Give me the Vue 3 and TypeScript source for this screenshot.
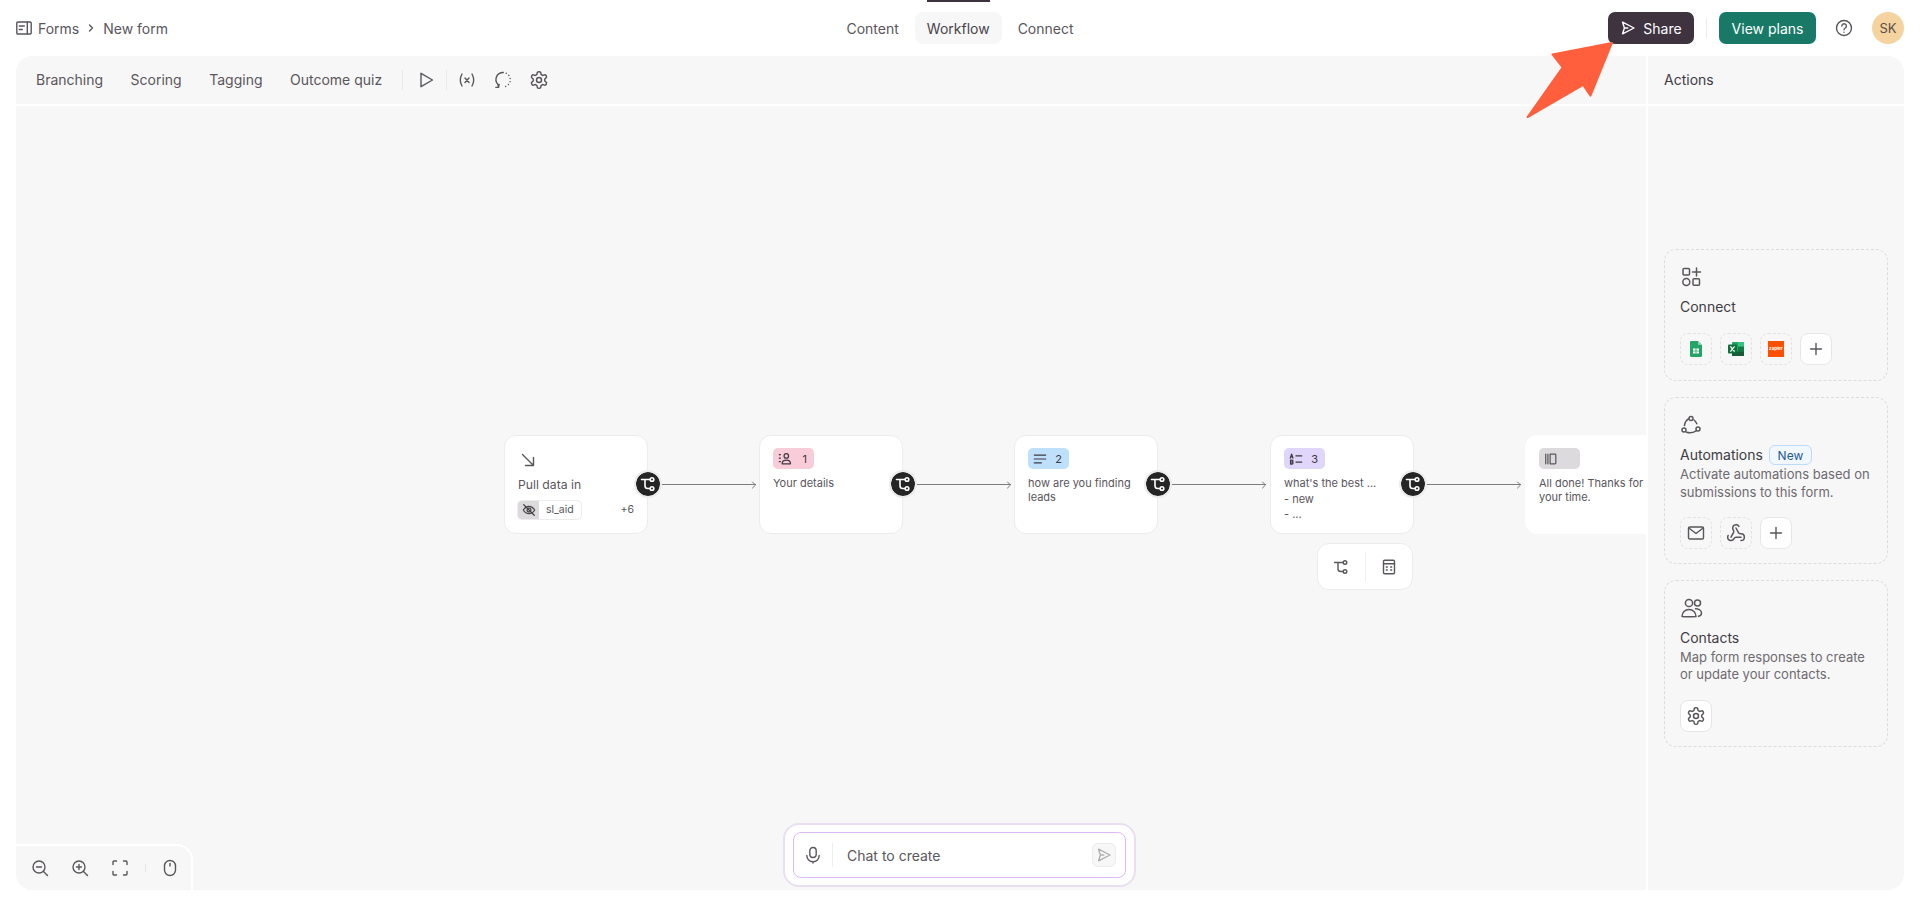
<script setup lang="ts">
interface FlowNode {
  x: number
  badge?: string
  icon?: string
  num?: string
  lines?: string[]
  clipped?: boolean
}

const tabs = ['Content', 'Workflow', 'Connect']
const tools = ['Branching', 'Scoring', 'Tagging', 'Outcome quiz']

const nodes: FlowNode[] = [
  { x: 743, badge: 'pink', icon: 'i-person', num: '1', lines: ['Your details'] },
  { x: 998, badge: 'blue', icon: 'i-lines', num: '2', lines: ['how are you finding', 'leads'] },
  { x: 1254, badge: 'purple', icon: 'i-ab', num: '3', lines: ["what's the best ..."] },
  { x: 1509, badge: 'grey', icon: 'i-columns', lines: ['All done! Thanks for', 'your time.'], clipped: true },
]
const connectors = [632, 887, 1142, 1397]
</script>

<template>
  <div class="page">
    <svg class="sprite" aria-hidden="true">
      <symbol id="i-branch" viewBox="0 0 16 16">
        <path d="M1.500 3.500h8.500M5 3.500v6.200a2.800 2.800 0 0 0 2.800 2.800H10" />
        <circle cx="12" cy="3.500" r="1.800" />
        <circle cx="12" cy="12.500" r="1.800" />
      </symbol>
      <symbol id="i-gear" viewBox="0 0 24 24">
        <path d="M12.22 2h-.44a2 2 0 0 0-2 2v.18a2 2 0 0 1-1 1.73l-.43.25a2 2 0 0 1-2 0l-.15-.08a2 2 0 0 0-2.73.73l-.22.38a2 2 0 0 0 .73 2.73l.15.1a2 2 0 0 1 1 1.72v.51a2 2 0 0 1-1 1.74l-.15.09a2 2 0 0 0-.73 2.73l.22.38a2 2 0 0 0 2.73.73l.15-.08a2 2 0 0 1 2 0l.43.25a2 2 0 0 1 1 1.73V20a2 2 0 0 0 2 2h.44a2 2 0 0 0 2-2v-.18a2 2 0 0 1 1-1.73l.43-.25a2 2 0 0 1 2 0l.15.08a2 2 0 0 0 2.73-.73l.22-.39a2 2 0 0 0-.73-2.73l-.15-.08a2 2 0 0 1-1-1.74v-.5a2 2 0 0 1 1-1.74l.15-.09a2 2 0 0 0 .73-2.73l-.22-.38a2 2 0 0 0-2.73-.73l-.15.08a2 2 0 0 1-2 0l-.43-.25a2 2 0 0 1-1-1.73V4a2 2 0 0 0-2-2z" />
        <circle cx="12" cy="12" r="3" />
      </symbol>
      <symbol id="i-send" viewBox="0 0 16 16">
        <path d="M2.600 2.200 14 8 2.600 13.800 4.400 8zM4.400 8h3.400" />
      </symbol>
      <symbol id="i-plus" viewBox="0 0 16 16">
        <path d="M8 2.500v11M2.500 8h11" />
      </symbol>
      <symbol id="i-person" viewBox="0 0 16 16">
        <circle cx="9.500" cy="4.500" r="2.600" />
        <path d="M4.700 13.500c0-2.700 2-4.200 4.800-4.200s4.800 1.500 4.800 4.200zM1.500 3h1.200M1.500 7h1.200M1.500 11h1.200" />
      </symbol>
      <symbol id="i-lines" viewBox="0 0 16 16">
        <path d="M1.500 3.500h13M1.500 8h13M1.500 12.500h8" />
      </symbol>
      <symbol id="i-ab" viewBox="0 0 16 16">
        <path class="heavy" d="M1.500 7 3 2.500 4.500 7M2 5.500h2M1.800 9.200v4.500h1.600a1.100 1.100 0 0 0 0-2.300 1.100 1.100 0 0 0 0-2.200zM8 4.500h6.500M8 11.500h6.500" />
      </symbol>
      <symbol id="i-columns" viewBox="0 0 16 16">
        <path d="M2 2.500v11M4.500 2.500v11M7 2.500h5.500a1 1 0 0 1 1 1v9a1 1 0 0 1-1 1H7z" />
      </symbol>
    </svg>

    <header class="topbar">
      <nav class="crumbs">
        <svg class="ic16" viewBox="0 0 16 16"><rect x="0.800" y="2" width="14.400" height="12" rx="1" /><path d="M3.300 6h5M3.300 9.500h3M11.300 2v12" /></svg>
        <span class="crumb-first">Forms</span>
        <svg class="chev" viewBox="0 0 10 10"><path d="m3.500 2 3 3-3 3" /></svg>
        <span>New form</span>
      </nav>
      <div class="tabs">
        <button v-for="t in tabs" :key="t" class="tab" :class="{ active: t === 'Workflow' }">{{ t }}</button>
      </div>
      <div class="top-actions">
        <button class="share">
          <svg class="ic16" viewBox="0 0 16 16"><use href="#i-send" /></svg>
          Share
        </button>
        <span class="top-sep"></span>
        <button class="plans">View plans</button>
        <svg class="help" viewBox="0 0 20 20">
          <circle cx="10" cy="10" r="7.500" />
          <path d="M7.800 8a2.300 2.300 0 1 1 3.500 2c-.8.500-1.300.900-1.300 1.800M10 14.200v.1" />
        </svg>
        <div class="avatar">SK</div>
      </div>
    </header>

    <main class="panel">
      <section class="builder">
        <div class="toolbar">
          <div class="tool-group">
            <button v-for="t in tools" :key="t" class="tool">{{ t }}</button>
          </div>
          <span class="tool-sep first"></span>
          <span class="tool-icon play">
            <svg class="ic20" viewBox="0 0 20 20"><path d="M5 3.300 16.500 10 5 16.700z" /></svg>
          </span>
          <span class="tool-sep second"></span>
          <div class="icon-group">
            <span class="tool-icon">
              <svg class="ic20" viewBox="0 0 20 20"><path d="M5 4c-2 3.500-2 8.500 0 12M15 4c2 3.500 2 8.500 0 12M8 8l4 4.500M12 8l-4 4.500" /></svg>
            </span>
            <span class="tool-icon">
              <svg class="ic20" viewBox="0 0 20 20"><path d="M10 2.500a7 7 0 0 0-5.200 11.700l.8 3M5.600 17.200l-2.700.2M5.600 17.200l.5-2.700" /><path class="dots" d="M10 2.500a7 7 0 0 1 0 14.500" /></svg>
            </span>
            <span class="tool-icon">
              <svg class="ic20 thick" viewBox="0 0 24 24"><use href="#i-gear" /></svg>
            </span>
          </div>
        </div>

        <div class="canvas">
          <div class="hline" v-for="c in connectors" :key="c" :style="{ left: c + 'px' }">
            <svg class="head" viewBox="0 0 6 8"><path d="m1.500 1 3 3-3 3" /></svg>
          </div>

          <article class="node source">
            <svg class="ic14 source-icon" viewBox="0 0 14 14"><path d="m1.500 1.500 11 11M12.500 4.500v8h-8" /></svg>
            <div class="source-title">Pull data in</div>
            <div class="source-row">
              <div class="chip">
                <span class="chip-eye">
                  <svg class="ic14" viewBox="0 0 16 16"><path d="M1.500 8S4 3.800 8 3.800 14.500 8 14.500 8 12 12.200 8 12.200 1.500 8 1.500 8z" /><circle cx="8" cy="8" r="2.200" /><path d="m2 2 12 12" /></svg>
                </span>
                <span class="chip-label">sl_aid</span>
              </div>
              <span class="more">+6</span>
            </div>
          </article>

          <article
            v-for="n in nodes"
            :key="n.x"
            class="node"
            :class="{ clipped: n.clipped }"
            :style="{ left: n.x + 'px' }"
          >
            <div class="badge" :class="n.badge">
              <svg class="ic14" viewBox="0 0 16 16"><use :href="'#' + n.icon" /></svg>
              <span v-if="n.num">{{ n.num }}</span>
            </div>
            <p class="node-text">
              <template v-for="l in n.lines" :key="l">{{ l }}<br /></template>
            </p>
            <div v-if="n.num === '3'" class="opts">
              <div>- new</div>
              <div>- ...</div>
            </div>
          </article>

          <button v-for="c in connectors" :key="'b' + c" class="disk" :style="{ left: c - 14 + 'px' }">
            <svg class="ic16 disk-icon" viewBox="0 0 16 16"><use href="#i-branch" /></svg>
          </button>

          <div class="mini">
            <span class="mini-cell">
              <svg class="ic16" viewBox="0 0 16 16"><use href="#i-branch" /></svg>
            </span>
            <span class="mini-cell second">
              <svg class="ic16" viewBox="0 0 16 16"><rect x="2.500" y="1.200" width="11" height="13.600" rx="1.200" /><path d="M2.500 4.800h11M5.300 8h1M9.700 8h1M5.300 11h1M9.700 11h1" /></svg>
            </span>
          </div>

          <div class="zoombar">
            <svg class="ic18" viewBox="0 0 18 18"><circle cx="8" cy="8" r="6" /><path d="m12.500 12.500 4 4M5.500 8h5" /></svg>
            <svg class="ic18" viewBox="0 0 18 18"><circle cx="8" cy="8" r="6" /><path d="m12.500 12.500 4 4M5.500 8h5M8 5.500v5" /></svg>
            <svg class="ic18" viewBox="0 0 18 18"><path d="M2 5.500V3a1 1 0 0 1 1-1h2.500M12.500 2H15a1 1 0 0 1 1 1v2.500M16 12.500V15a1 1 0 0 1-1 1h-2.500M5.500 16H3a1 1 0 0 1-1-1v-2.500" /></svg>
            <span class="zoom-sep"></span>
            <svg class="ic18" viewBox="0 0 18 18"><rect x="3.500" y="1.500" width="11" height="15" rx="5.500" /><path d="M9 4.500v2.500" /></svg>
          </div>

          <div class="chat">
            <div class="chat-inner">
              <svg class="ic18 mic" viewBox="0 0 18 18"><rect x="5.800" y="1.500" width="6.400" height="10" rx="3.200" /><path d="M2.800 9.500a6.200 6.200 0 0 0 12.400 0M9 15.700v1.300" /></svg>
              <span class="chat-sep"></span>
              <span class="chat-text">Chat to create</span>
              <span class="chat-send">
                <svg class="ic16" viewBox="0 0 16 16"><use href="#i-send" /></svg>
              </span>
            </div>
          </div>
        </div>
      </section>

      <aside class="side">
        <div class="side-head">Actions</div>
        <div class="side-body">
          <div class="card first">
            <svg class="card-icon" viewBox="0 0 22 22"><rect x="3" y="2.500" width="6.500" height="6.500" rx="1" /><path d="M16.500 2v8M12.500 6h8" /><circle cx="6.300" cy="16" r="3.500" /><rect x="13" y="12.800" width="6.500" height="6.500" rx="1" /></svg>
            <h3 class="card-title">Connect</h3>
            <div class="card-btns">
              <span class="sq dashed">
                <svg class="logo" viewBox="0 0 16 16">
                  <path class="fill-sheet" d="M3 0h7l4 4v10.500a1.500 1.500 0 0 1-1.500 1.500h-9A1.500 1.500 0 0 1 2 14.500V1a1 1 0 0 1 1-1z" />
                  <path class="fill-sheet-d" d="M10 0l4 4h-3a1 1 0 0 1-1-1z" />
                  <rect class="fill-white" x="5" y="7.500" width="6" height="5" />
                  <path class="sheet-grid" d="M8 7.500v5M5 10h6" />
                </svg>
              </span>
              <span class="sq dashed">
                <svg class="logo" viewBox="0 0 16 16">
                  <rect class="x1" x="4" y="1" width="12" height="14" rx="1" />
                  <rect class="x2" x="10" y="1" width="6" height="4.700" />
                  <rect class="x3" x="10" y="5.700" width="6" height="4.700" />
                  <rect class="x4" x="4" y="10.400" width="12" height="4.600" />
                  <rect class="x5" x="0" y="3.500" width="9" height="9" rx="1" />
                  <path class="x-mark" d="m2.800 5.800 3.400 4.400M6.200 5.800l-3.400 4.400" />
                </svg>
              </span>
              <span class="sq dashed">
                <span class="zapier">zapier</span>
              </span>
              <span class="sq solid">
                <svg class="ic16" viewBox="0 0 16 16"><use href="#i-plus" /></svg>
              </span>
            </div>
          </div>

          <div class="card">
            <svg class="card-icon" viewBox="0 0 22 22"><circle cx="11" cy="4.500" r="2" /><circle cx="4" cy="16" r="2" /><circle cx="18" cy="15" r="2" /><path d="M8.700 4.700C6.500 6 5 8 4.400 11.500M14 6c1.400 1 2.200 2.300 2.800 3.800M6.500 18.300c3.500 1 6.800.4 9.700-1.500" /></svg>
            <div class="title-row">
              <h3 class="card-title">Automations</h3>
              <span class="new">New</span>
            </div>
            <p class="desc">Activate automations based on submissions to this form.</p>
            <div class="card-btns">
              <span class="sq dashed">
                <svg class="ic18" viewBox="0 0 18 18"><rect x="1.500" y="3" width="15" height="12" rx="1.300" /><path d="m1.800 4 7.200 5.500L16.200 4" /></svg>
              </span>
              <span class="sq dashed">
                <svg class="ic20 thick" viewBox="0 0 24 24"><path d="M18 16.980h-5.990c-1.100 0-1.950.940-2.480 1.900A4 4 0 0 1 2 17c.010-.700.200-1.400.570-2" /><path d="m6 17 3.130-5.780c.530-.970.100-2.180-.500-3.100a4 4 0 1 1 6.890-4.060" /><path d="m12 6 3.130 5.730C15.660 12.700 16.900 13 18 13a4 4 0 0 1 0 8" /></svg>
              </span>
              <span class="sq solid">
                <svg class="ic16" viewBox="0 0 16 16"><use href="#i-plus" /></svg>
              </span>
            </div>
          </div>

          <div class="card tight">
            <svg class="card-icon contacts" viewBox="0 0 24 22"><circle cx="9" cy="6" r="3.600" /><circle cx="17.500" cy="6" r="3" /><path d="M2 19.500c0-4.200 3-7 7-7s7 2.800 7 7c-4 .3-10 .3-14 0zM15.500 11.800c3 0 6 1.500 6 4.500 0 1.700-1 2.600-3 3" /></svg>
            <h3 class="card-title">Contacts</h3>
            <p class="desc">Map form responses to create or update your contacts.</p>
            <div class="card-btns">
              <span class="sq solid">
                <svg class="ic20 thick" viewBox="0 0 24 24"><use href="#i-gear" /></svg>
              </span>
            </div>
          </div>
        </div>
      </aside>
    </main>

    <svg class="pointer" viewBox="0 0 90 80">
      <path d="M88 1 66 55 58.500 44 1.500 77 37.500 26 27 12.800z" />
    </svg>
  </div>
</template>

<style>
html,
body {
  margin: 0;
  background: #fff;
}
</style>

<style scoped>
.page {
  position: relative;
  height: 906px;
  overflow: hidden;
  display: flex;
  flex-direction: column;
  font-family: Inter, "Liberation Sans", sans-serif;
  font-size: 14px;
  color: #5a565c;
  background: #fff;
}
.sprite {
  position: absolute;
  width: 0;
  height: 0;
}
svg {
  fill: none;
  stroke: currentColor;
  stroke-width: 1.400;
  stroke-linecap: round;
  stroke-linejoin: round;
  flex: none;
  display: block;
}
button {
  font: inherit;
  color: inherit;
  border: 0;
  background: none;
  padding: 0;
}
.ic14 { width: 14px; height: 14px; }
.ic16 { width: 16px; height: 16px; }
.ic18 { width: 18px; height: 18px; }
.ic20 { width: 20px; height: 20px; }
.thick { stroke-width: 1.800; }

/* top bar */
.topbar {
  height: 56px;
  flex: none;
  display: grid;
  grid-template-columns: 1fr auto 1fr;
  align-items: center;
  padding: 0 16px;
  box-sizing: border-box;
}
.crumbs {
  display: flex;
  align-items: center;
}
.crumb-first { margin-left: 6px; }
.chev {
  width: 10px;
  height: 10px;
  margin: 0 7px;
  stroke-width: 1.400;
}
.tabs {
  display: flex;
  gap: 4px;
  height: 56px;
  align-items: flex-start;
}
.tab {
  height: 32px;
  margin-top: 12px;
  padding: 0 12px;
  border-radius: 8px;
  position: relative;
}
.tab.active {
  background: #f7f7f7;
  color: #4a444c;
}
.tab.active::before {
  content: "";
  position: absolute;
  top: -12px;
  left: 12px;
  right: 12px;
  height: 2px;
  background: #3e323e;
}
.top-actions {
  display: flex;
  align-items: center;
  justify-content: flex-end;
}
.share {
  height: 32px;
  width: 86px;
  display: flex;
  align-items: center;
  justify-content: center;
  gap: 7px;
  background: #3e333f;
  border-radius: 7px;
  color: #fff;
}
.top-sep {
  width: 1px;
  height: 20px;
  margin: 0 12px;
  background: #ececec;
}
.plans {
  height: 32px;
  width: 97px;
  background: #187a66;
  color: #fff;
  border-radius: 7px;
}
.help {
  width: 20px;
  height: 20px;
  margin-left: 18px;
}
.avatar {
  width: 32px;
  height: 32px;
  margin-left: 18px;
  border-radius: 50%;
  background: #f4d39f;
  color: #5a4f4a;
  display: flex;
  align-items: center;
  justify-content: center;
  font-size: 13px;
}

/* main */
.panel {
  flex: none;
  height: 834px;
  margin: 0 16px;
  display: flex;
  gap: 2px;
  border-radius: 16px;
  overflow: hidden;
}
.builder {
  flex: 1;
  display: flex;
  flex-direction: column;
  gap: 2px;
  min-width: 0;
}
.toolbar {
  height: 48px;
  box-sizing: border-box;
  flex: none;
  display: flex;
  align-items: center;
  padding: 0 0 1px 20px;
  background: #f7f7f7;
}
.tool-group {
  display: flex;
  gap: 27.500px;
}
.icon-group {
  display: flex;
  gap: 4px;
  margin-left: 4px;
}
.tool-sep {
  width: 1px;
  height: 20px;
  background: #e9e9e9;
}
.tool-sep.first { margin-left: 20px; }
.tool-icon {
  width: 32px;
  height: 32px;
  display: flex;
  align-items: center;
  justify-content: center;
}
.tool-icon.play { margin: 0 4px 0 7px; }
.dots { stroke-dasharray: 0.100 3.200; }

.canvas {
  flex: 1;
  position: relative;
  overflow: hidden;
  background: #f7f7f7;
}
.hline {
  position: absolute;
  top: 378px;
  width: 108px;
  height: 1px;
  background: #7d7b7d;
}
.head {
  position: absolute;
  right: -1px;
  top: -3.500px;
  width: 6px;
  height: 8px;
  stroke-width: 1;
  color: #777;
}
.node {
  position: absolute;
  top: 329px;
  width: 144px;
  height: 99px;
  box-sizing: border-box;
  padding: 12px 13px;
  background: #fff;
  border: 1px solid #ececec;
  border-radius: 12px;
  font-size: 11px;
  line-height: 14px;
}
.node.clipped {
  border-color: #fff;
}
.source {
  left: 488px;
  padding-top: 17px;
}
.source-icon {
  width: 14px;
  height: 14px;
  margin-left: 3px;
}
.source-title {
  margin-top: 10px;
  font-size: 12.200px;
  line-height: 16px;
}
.source-row {
  margin-top: 7px;
  display: flex;
  align-items: center;
  justify-content: space-between;
  margin-left: -1px;
}
.chip {
  display: flex;
  height: 20px;
  width: 65px;
  box-sizing: border-box;
  border: 1px solid #ececec;
  border-radius: 5px;
  overflow: hidden;
  font-size: 10.500px;
}
.chip-eye {
  width: 21px;
  background: #dcdadc;
  display: flex;
  align-items: center;
  justify-content: center;
  color: #444;
}
.chip-label {
  margin-left: 7px;
  line-height: 18px;
}
.more { font-size: 10.500px; }
.badge {
  width: 41px;
  height: 21px;
  border-radius: 5px;
  box-sizing: border-box;
  padding: 0 7px 0 5px;
  display: flex;
  align-items: center;
  justify-content: space-between;
  font-size: 11px;
  color: #3d3a40;
}
.badge.pink { background: #f8ccd9; }
.badge.blue { background: #bfe0fb; }
.badge.purple { background: #e0d5fb; }
.badge.grey { background: #dcdadc; color: #5a565c; }
.heavy { stroke-width: 1.500; }
.node-text {
  margin: 7px 0 0;
}
.opts {
  margin-top: 2px;
  line-height: 15px;
}
.disk {
  position: absolute;
  top: 364px;
  width: 28px;
  height: 28px;
  box-sizing: border-box;
  border-radius: 50%;
  background: #252525;
  border: 2px solid #ececec;
  background-clip: padding-box;
  display: flex;
  align-items: center;
  justify-content: center;
  color: #fff;
}
.disk-icon { stroke-width: 1.600; }
.mini {
  position: absolute;
  left: 1301px;
  top: 437px;
  width: 96px;
  height: 47px;
  box-sizing: border-box;
  display: flex;
  align-items: center;
  background: #fff;
  border: 1px solid #ececec;
  border-radius: 12px;
}
.mini-cell {
  flex: 1;
  display: flex;
  justify-content: center;
  align-items: center;
  height: 30px;
}
.mini-cell.second { border-left: 1px solid #f0f0f0; }
.zoombar {
  position: absolute;
  left: 0;
  bottom: 0;
  width: 177px;
  height: 46px;
  box-sizing: border-box;
  background: #f7f7f7;
  border-top: 2px solid #fff;
  border-right: 2px solid #fff;
  border-top-right-radius: 16px;
  display: flex;
  align-items: center;
  padding-left: 15px;
  gap: 22px;
}
.zoom-sep {
  width: 1px;
  height: 8px;
  background: #e4e4e4;
  margin: 0 -7px 0 -6px;
}
.chat {
  position: absolute;
  left: 767px;
  top: 717px;
  width: 353px;
  height: 64px;
  box-sizing: border-box;
  padding: 7px 8px;
  background: #fff;
  border: 2px solid #eadff0;
  border-radius: 16px;
}
.chat-inner {
  height: 46px;
  box-sizing: border-box;
  border: 1px solid #e0b9f2;
  border-radius: 8px;
  display: flex;
  align-items: center;
  padding: 0 9px 0 10px;
}
.chat-sep {
  width: 1px;
  height: 24px;
  background: #eeeeee;
  margin: 0 14px 0 10px;
}
.chat-text {
  flex: 1;
}
.chat-send {
  width: 24px;
  height: 24px;
  box-sizing: border-box;
  border: 1px solid #ececec;
  border-radius: 6px;
  background: #f7f7f7;
  display: flex;
  align-items: center;
  justify-content: center;
  color: #b0aeb0;
}

/* sidebar */
.side {
  width: 256px;
  flex: none;
  display: flex;
  flex-direction: column;
  gap: 2px;
}
.side-head {
  height: 48px;
  box-sizing: border-box;
  flex: none;
  display: flex;
  align-items: center;
  padding: 0 0 1px 16px;
  background: #f7f7f7;
  color: #413c44;
}
.side-body {
  flex: 1;
  background: #f7f7f7;
  padding: 143px 16px 0;
  display: flex;
  flex-direction: column;
  gap: 16px;
}
.card {
  border: 1px dashed #dcdcdc;
  border-radius: 12px;
  padding: 16px 15px 14px;
}
.card.first { padding-bottom: 15px; }
.card-icon {
  width: 22px;
  height: 22px;
  stroke-width: 1.500;
}
.card-icon.contacts {
  width: 24px;
}
.card-title {
  margin: 9px 0 0;
  font-size: 14px;
  line-height: 20px;
  font-weight: 400;
  color: #413c44;
}
.title-row {
  display: flex;
  align-items: center;
  gap: 6px;
  margin-top: 9px;
}
.title-row .card-title { margin: 0; }
.new {
  height: 20px;
  width: 43px;
  box-sizing: border-box;
  border: 1px solid #bcdcf8;
  background: #f0f7fd;
  border-radius: 6px;
  color: #1f5a94;
  font-size: 12px;
  display: flex;
  align-items: center;
  justify-content: center;
}
.desc {
  margin: 0;
  font-size: 13px;
  line-height: 18px;
  color: #6e6a70;
}
.tight .desc {
  line-height: 17px;
  margin-top: 1px;
}
.card-btns {
  display: flex;
  gap: 8px;
  margin-top: 16px;
}
.tight .card-btns { margin-top: 17px; }
.sq {
  width: 32px;
  height: 32px;
  box-sizing: border-box;
  border-radius: 8px;
  display: flex;
  align-items: center;
  justify-content: center;
}
.sq.dashed { border: 1px dashed #e2e2e2; }
.sq.solid {
  border: 1px solid #e6e6e6;
  background: #fff;
}
.logo {
  width: 16px;
  height: 16px;
  stroke: none;
}
.fill-sheet { fill: #23a566; }
.fill-sheet-d { fill: #8ed1b1; }
.fill-white { fill: #fff; }
.sheet-grid { stroke: #23a566; stroke-width: 0.800; }
.x1 { fill: #21a366; }
.x2 { fill: #33c481; }
.x3 { fill: #107c41; }
.x4 { fill: #185c37; }
.x5 { fill: #10703c; }
.x-mark { stroke: #fff; stroke-width: 1.300; }
.zapier {
  width: 16px;
  height: 16px;
  background: #ff4f00;
  color: #fff;
  font-size: 4.500px;
  font-weight: 700;
  line-height: 16px;
  text-align: center;
  overflow: hidden;
}

/* annotation */
.pointer {
  position: absolute;
  left: 1526px;
  top: 42px;
  width: 88px;
  height: 78px;
  fill: #ff5f3c;
  stroke: #ff5f3c;
  stroke-width: 2;
}
</style>
